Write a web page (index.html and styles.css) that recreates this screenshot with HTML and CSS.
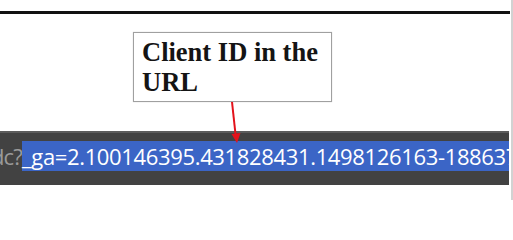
FILE: index.html
```html
<!DOCTYPE html>
<html>
<head>
<meta charset="utf-8">
<link rel="stylesheet" href="styles.css">
</head>
<body>
<div class="page">
  <div class="content">
    <div class="rule"></div>
    <div class="callout">Client ID in the<br>URL</div>
    <div class="urlbar">
      <div class="prefix"><span>dc?</span></div>
      <div class="selected">_ga=2.100146395.431828431.1498126163-188637</div>
    </div>
  </div>
  <div class="edge"></div>
  <svg class="arrow" width="20" height="50" viewBox="0 0 20 50">
    <line x1="4" y1="0" x2="7.6" y2="33" stroke="#e3121b" stroke-width="2"/>
    <polygon points="3.5,32 12.5,31 9,41" fill="#e3121b"/>
  </svg>
</div>
</body>
</html>
```
FILE: styles.css
```css
html, body {
  margin: 0;
  padding: 0;
  background: #ffffff;
}
.page {
  position: relative;
  width: 513px;
  height: 200px;
  display: flex;
  overflow: hidden;
}
.content {
  width: 510px;
  display: flex;
  flex-direction: column;
}
.edge {
  width: 2px;
  margin-left: 1px;
  background: #d2d2d2;
}
.rule {
  margin-top: 11px;
  height: 2.5px;
  background: #111111;
}
.callout {
  margin-top: 18px;
  margin-left: 133px;
  width: 184px;
  padding: 4px 5px 4px 8px;
  border: 1.5px solid #a0a0a0;
  box-shadow: 0 0 1px #c8c8c8;
  font-family: "Liberation Serif", serif;
  font-weight: bold;
  font-size: 26.5px;
  line-height: 30px;
  color: #141414;
}
.urlbar {
  margin-top: 29px;
  width: 509px;
  height: 44px;
  padding-top: 8px;
  border-top: 2px solid #5c5c5c;
  background: #424242;
  display: flex;
  overflow: hidden;
  font-family: "Open Sans", "Noto Sans", sans-serif;
  font-size: 22px;
  line-height: 30px;
}
.prefix {
  flex: 0 0 22px;
  height: 30px;
  display: flex;
  justify-content: flex-end;
  overflow: hidden;
  color: #9a9a9a;
  white-space: nowrap;
  letter-spacing: -0.8px;
}
.selected {
  flex: 0 0 auto;
  height: 30px;
  background: #3b65c6;
  color: #ffffff;
  white-space: nowrap;
  letter-spacing: -0.35px;
}
.arrow {
  position: absolute;
  left: 228px;
  top: 102px;
}
```
